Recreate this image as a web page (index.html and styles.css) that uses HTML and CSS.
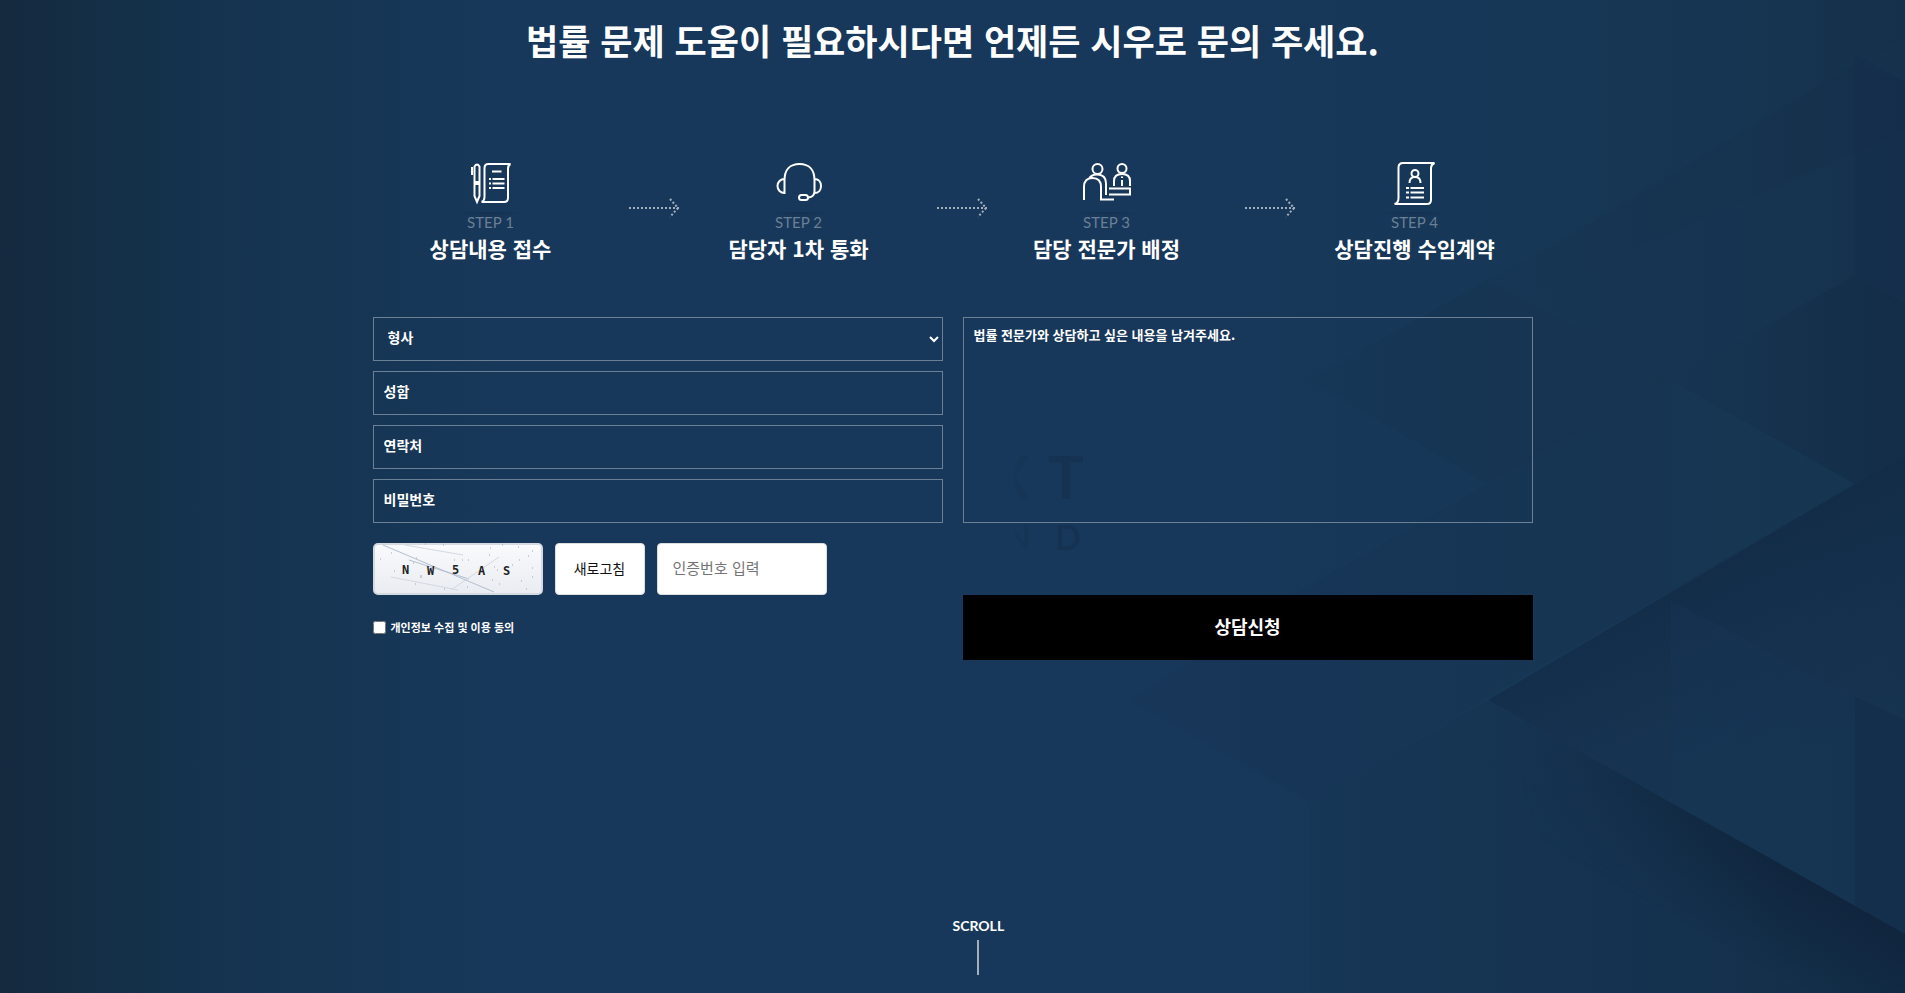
FILE: index.html
```html
<!DOCTYPE html>
<html lang="ko">
<head>
<meta charset="utf-8">
<meta name="viewport" content="width=device-width, initial-scale=1">
<title>법률 상담 신청</title>
<link rel="stylesheet" href="styles.css">
</head>
<body>
<main class="contact">
  <svg class="backdrop" viewBox="0 0 1905 993" preserveAspectRatio="none" aria-hidden="true">
    <defs>
      <linearGradient id="base" x1="0" x2="1" y1="0" y2="0">
        <stop offset="0" stop-color="#15293f"/>
        <stop offset=".035" stop-color="#142d43"/>
        <stop offset=".09" stop-color="#14324c"/>
        <stop offset=".16" stop-color="#163553"/>
        <stop offset=".27" stop-color="#18385b"/>
        <stop offset=".62" stop-color="#18385b"/>
        <stop offset=".8" stop-color="#173757"/>
        <stop offset=".92" stop-color="#163551"/>
        <stop offset="1" stop-color="#15304a"/>
      </linearGradient>
      <linearGradient id="fold" x1="0" x2="1" y1="0" y2="0">
        <stop offset="0" stop-color="#122a44" stop-opacity="0"/>
        <stop offset="1" stop-color="#122a44" stop-opacity=".75"/>
      </linearGradient>
      <linearGradient id="veil" x1="0" x2="1" y1="0" y2="0">
        <stop offset="0" stop-color="#16334f" stop-opacity="0"/>
        <stop offset=".5" stop-color="#16334f" stop-opacity=".8"/>
        <stop offset="1" stop-color="#16334f" stop-opacity=".8"/>
      </linearGradient>
      <linearGradient id="ridge" gradientUnits="userSpaceOnUse" x1="1640" y1="600" x2="1740" y2="800">
        <stop offset="0" stop-color="#122b46" stop-opacity=".8"/>
        <stop offset=".7" stop-color="#15314e" stop-opacity=".5"/>
        <stop offset="1" stop-color="#163551" stop-opacity=".4"/>
      </linearGradient>
      <linearGradient id="creaseDepth" gradientUnits="userSpaceOnUse" x1="1720" y1="830" x2="1672" y2="916">
        <stop offset="0" stop-color="#fff"/>
        <stop offset="1" stop-color="#000"/>
      </linearGradient>
      <mask id="creaseMask" maskUnits="userSpaceOnUse" x="1400" y="650" width="520" height="343"><rect x="1400" y="650" width="520" height="343" fill="url(#creaseDepth)"/></mask>
      <linearGradient id="crease" gradientUnits="userSpaceOnUse" x1="1520" y1="0" x2="1780" y2="0">
        <stop offset="0" stop-color="#10233b" stop-opacity="0"/>
        <stop offset="1" stop-color="#10233b" stop-opacity=".8"/>
      </linearGradient>
      <linearGradient id="floor" gradientUnits="userSpaceOnUse" x1="1309" y1="0" x2="1905" y2="0">
        <stop offset="0" stop-color="#163553" stop-opacity=".5"/>
        <stop offset="1" stop-color="#122d47" stop-opacity=".8"/>
      </linearGradient>
      <linearGradient id="markFade" gradientUnits="userSpaceOnUse" x1="1014" y1="0" x2="1060" y2="0">
        <stop offset="0" stop-color="#173657"/>
        <stop offset="1" stop-color="#153252"/>
      </linearGradient>
      <clipPath id="markClip"><rect x="1014" y="440" width="80" height="130"/></clipPath>
    </defs>
    <rect width="1905" height="993" fill="url(#base)"/>
    <path d="M1309 380 1605 215 1905 38V993H1671V380L1488 484Z" fill="url(#veil)" opacity=".5"/>
    <path d="M1309 380 1488 280 1671 380V590L1488 697 1304 801V589L1488 484Z" fill="url(#veil)" opacity=".5"/>
    <path d="M1309 380 1488 280V484Z" fill="#163553" opacity=".5"/>
    <path d="M1130 700 1304 589 1488 484V697L1309 801Z" fill="#163553" opacity=".35"/>
    <path d="M1518 265 1855 64 1905 82V130L1712 215 1518 300Z" fill="url(#fold)" opacity=".35"/>
    <path d="M1855 54 1905 82V304L1855 275Z" fill="#12294a" opacity=".25"/>
    <path d="M1712 215 1855 275 1905 304V459L1855 484 1671 380 1855 275Z" fill="url(#fold)" opacity=".7"/>
    <path d="M1671 380 1855 484 1671 590Z" fill="#173955" opacity=".4"/>
    <path d="M1855 484 1905 456V934L1488 700Z" fill="url(#ridge)"/>
    <path d="M1671 600 1855 697V910L1671 803Z" fill="#17395a" opacity=".25"/>
    <path d="M1855 697 1905 720V934L1855 906Z" fill="#122c47" opacity=".5"/>
    <path d="M1488 700 1905 934V993H1309V801Z" fill="url(#floor)"/>
    <path d="M1488 700 1905 934V993H1600Z" fill="url(#crease)" mask="url(#creaseMask)"/>
    <g class="mark" fill="url(#markFade)" clip-path="url(#markClip)">
      <text x="1010" y="499" font-size="60" text-anchor="middle">X</text>
      <text x="1066" y="499" font-size="60" text-anchor="middle">T</text>
      <text x="1018" y="550" font-size="34" text-anchor="middle">N</text>
      <text x="1068" y="550" font-size="34" text-anchor="middle">D</text>
    </g>
  </svg>

  <div class="wrap">
    <h1 class="headline">법률 문제 도움이 필요하시다면 언제든 시우로 문의 주세요.</h1>

    <ol class="steps">
      <li class="step">
        <svg class="icon" viewBox="0 0 50 50" aria-hidden="true">
          <g class="line">
            <path d="M8.500 4.500q2.500-4 5 0V20h-5ZM8.500 22h5V34L11 40l-2.500-6ZM6 5v8"/>
            <path d="M15.500 40H38q4 0 4-4V7q0-4 2.500-5H22.500q-4 0-4 4v29q0 4-3 5"/>
            <path d="M26 9.500h9.500M23 17h2M26.500 17h12M23 21.500h2M26.500 21.500h12M23 26h2M26.500 26h12"/>
          </g>
        </svg>
        <span class="count">STEP 1</span>
        <strong class="name">상담내용 접수</strong>
      </li>
      <li class="arrow" aria-hidden="true"><svg viewBox="0 0 50 20"><path d="M0 10h50M41 1l8 9-8 9"/></svg></li>
      <li class="step">
        <svg class="icon" viewBox="0 0 50 50" aria-hidden="true">
          <g class="line">
            <path d="M10.500 18C10.500 8 16 2 25.500 2S40.500 8 40.500 18v11q0 6-6 6.500M10.500 17v14c-4 0-7-3-7-7s3-7 7-7M40.500 17c4 0 6.500 3 6.500 7s-2.500 7-6.500 7"/>
            <rect x="25" y="33" width="9" height="5" rx="2.500"/>
          </g>
        </svg>
        <span class="count">STEP 2</span>
        <strong class="name">담당자 1차 통화</strong>
      </li>
      <li class="arrow" aria-hidden="true"><svg viewBox="0 0 50 20"><path d="M0 10h50M41 1l8 9-8 9"/></svg></li>
      <li class="step">
        <svg class="icon" viewBox="0 0 50 50" aria-hidden="true">
          <g class="line">
            <circle cx="15.500" cy="7" r="5"/><circle cx="40" cy="6.500" r="4.500"/>
            <path d="M2 38V25q0-9 8.500-9t8.500 9v12.500h13M7 17q2-4.500 8-4.500 9 0 9 9V33M32 24v-5q0-7 8-7t8 7v5M40 14.500v1.500M40 18v6M27 26.500h21v6H27"/>
          </g>
        </svg>
        <span class="count">STEP 3</span>
        <strong class="name">담당 전문가 배정</strong>
      </li>
      <li class="arrow" aria-hidden="true"><svg viewBox="0 0 50 20"><path d="M0 10h50M41 1l8 9-8 9"/></svg></li>
      <li class="step">
        <svg class="icon" viewBox="0 0 50 50" aria-hidden="true">
          <g class="line">
            <path d="M4.500 42H37q4 0 4-4V6q0-3.500 3.500-5H13Q8.500 1 8.500 5.500V36q0 5-4 6"/>
            <circle cx="25" cy="11.500" r="3.500"/>
            <path d="M19.500 21q0-6 5.500-6t5.500 6M16 26h3M20.500 26h13.500M16 30.500h3M20.500 30.500h13.500M16 35.500h3M20.500 35.500h13.500"/>
          </g>
        </svg>
        <span class="count">STEP 4</span>
        <strong class="name">상담진행 수임계약</strong>
      </li>
    </ol>

    <form class="form">
      <div class="fields">
        <select class="field" aria-label="상담 분야"><option>형사</option></select>
        <input class="field" type="text" placeholder="성함" aria-label="성함">
        <input class="field" type="tel" placeholder="연락처" aria-label="연락처">
        <input class="field" type="password" placeholder="비밀번호" aria-label="비밀번호">
      </div>
      <textarea class="field field-message" placeholder="법률 전문가와 상담하고 싶은 내용을 남겨주세요." aria-label="상담 내용"></textarea>

      <div class="verify">
        <div class="captcha-row">
          <svg class="captcha" viewBox="0 0 170 52" role="img" aria-label="인증번호 N W 5 A S">
            <defs><linearGradient id="paper" x1="0" x2="0" y1="0" y2="1"><stop offset="0" stop-color="#f9fafc"/><stop offset="1" stop-color="#e9ecf1"/></linearGradient></defs>
            <rect x="1" y="1" width="168" height="50" rx="4" fill="url(#paper)" stroke="#d5d9e0" stroke-width="2"/>
            <g stroke="#b9c2d3" fill="none">
              <path d="M10 2 121 49M36 17l60 19" stroke="#b4bfd0"/>
              <path d="M32 2l58 10M18 34l67 13M78 47l48-33" stroke="#d3d8e2"/>
              <path d="M18 10h1M52 1h1M70 2h1M129 2h1M117 5h1M145 4h1M116 12h1M155 13h1M159 8h1M81 17h1M89 17h1M95 17h1M7 16h1M21 28h1M48 32v3M139 22h1M124 27h1M159 25h1M119 37h1M126 41h1M148 38h1M159 34h1M42 41h1M71 46h1M94 44h1M153 46h1M146 17h1M121 24h1M43 15h1M40 20h1" stroke="#9aa6bb"/>
            </g>
            <g class="code"><text x="29" y="31">N</text><text x="54" y="32">W</text><text x="79" y="31">5</text><text x="105" y="32">A</text><text x="130" y="32">S</text></g>
          </svg>
          <button class="refresh" type="button">새로고침</button>
          <input class="answer" type="text" placeholder="인증번호 입력" aria-label="인증번호 입력">
        </div>
        <label class="consent"><input class="tick" type="checkbox">개인정보 수집 및 이용 동의</label>
      </div>
      <button class="submit" type="submit">상담신청</button>
    </form>
  </div>

  <a class="scroll" href="#next">SCROLL</a>
</main>
</body>
</html>
```
FILE: styles.css
```css
* { box-sizing: border-box; }

body {
  margin: 0;
  background: #18385b;
  color: #fff;
  font-family: "Noto Sans CJK KR", sans-serif;
}

.contact {
  position: relative;
  min-height: 100vh;
  overflow: hidden;
  padding: 13px 20px 130px;
}

.backdrop {
  position: absolute;
  inset: 0;
  width: 100%;
  height: 100%;
}

.mark {
  font-family: Lato, sans-serif;
  font-weight: 700;
}

.wrap {
  position: relative;
  max-width: 1160px;
  margin: 0 auto;
}

.headline {
  margin: 0;
  font-size: 35px;
  font-weight: 700;
  line-height: 54px;
  text-align: center;
}

.steps {
  display: flex;
  margin: 95px 0 54px;
  padding: 0;
  list-style: none;
}

.step {
  flex: 1;
  display: flex;
  flex-direction: column;
  align-items: center;
}

.icon {
  width: 50px;
  height: 50px;
}

.line {
  fill: none;
  stroke: #fff;
  stroke-width: 2;
}

.count {
  display: flex;
  justify-content: center;
  width: 72px;
  background: radial-gradient(ellipse 36px 5px at 50% 0, #14304f, transparent);
  color: #6b7f95;
  font-family: Lato, sans-serif;
  font-size: 15px;
  line-height: 21px;
}

.name {
  font-size: 21px;
  font-weight: 700;
  line-height: 30px;
}

.arrow {
  width: 72px;
  padding: 36px 0 0 20px;
}

.arrow svg {
  display: block;
  width: 50px;
  height: 20px;
  fill: none;
  stroke: #a3afbd;
  stroke-width: 2;
  stroke-dasharray: 2;
}

.form {
  display: grid;
  grid-template-columns: 1fr 1fr;
  gap: 20px;
}

.fields {
  display: grid;
  gap: 10px;
}

.field {
  width: 100%;
  height: 44px;
  padding: 0 10px 5px;
  border: 1px solid #6b7f95;
  border-radius: 0;
  background: transparent;
  color: #fff;
  font: 700 14px/20px "Noto Sans CJK KR", sans-serif;
}

.field::placeholder {
  color: #fff;
  opacity: 1;
}

.field-message {
  display: block;
  height: 100%;
  padding: 7px 10px;
  font-size: 13px;
  resize: none;
}

.captcha-row {
  display: flex;
  gap: 12px;
}

.captcha,
.answer {
  width: 170px;
  height: 52px;
}

.code {
  fill: #222;
  font: 700 12px "DejaVu Sans Mono", monospace;
}

.refresh,
.answer {
  border: 1px solid #ddd;
  border-radius: 4px;
  background: #fff;
  color: #111;
  font: 400 14px "Noto Sans CJK KR", sans-serif;
  padding: 0 15px 3px;
}

.refresh { width: 90px; }

.answer { font-size: 15px; }

.answer::placeholder { color: #757575; }

.consent {
  display: flex;
  align-items: center;
  gap: 5px;
  margin-top: 22px;
  font-size: 11px;
  font-weight: 700;
  line-height: 20px;
}

.tick {
  width: 13px;
  height: 13px;
  margin: 0;
}

.submit {
  align-self: end;
  height: 65px;
  padding-bottom: 4px;
  border: 0;
  background: #000;
  color: #fff;
  font: 700 18px "Noto Sans CJK KR", sans-serif;
}

.verify { padding-bottom: 23px; }

.scroll {
  position: absolute;
  bottom: 18px;
  left: 50%;
  color: #fff;
  font: 700 14px/20px Lato, sans-serif;
  text-decoration: none;
}

.scroll::after {
  content: "";
  display: block;
  width: 2px;
  height: 35px;
  margin: 4px auto 0;
  background: #a3afbd;
}
```
